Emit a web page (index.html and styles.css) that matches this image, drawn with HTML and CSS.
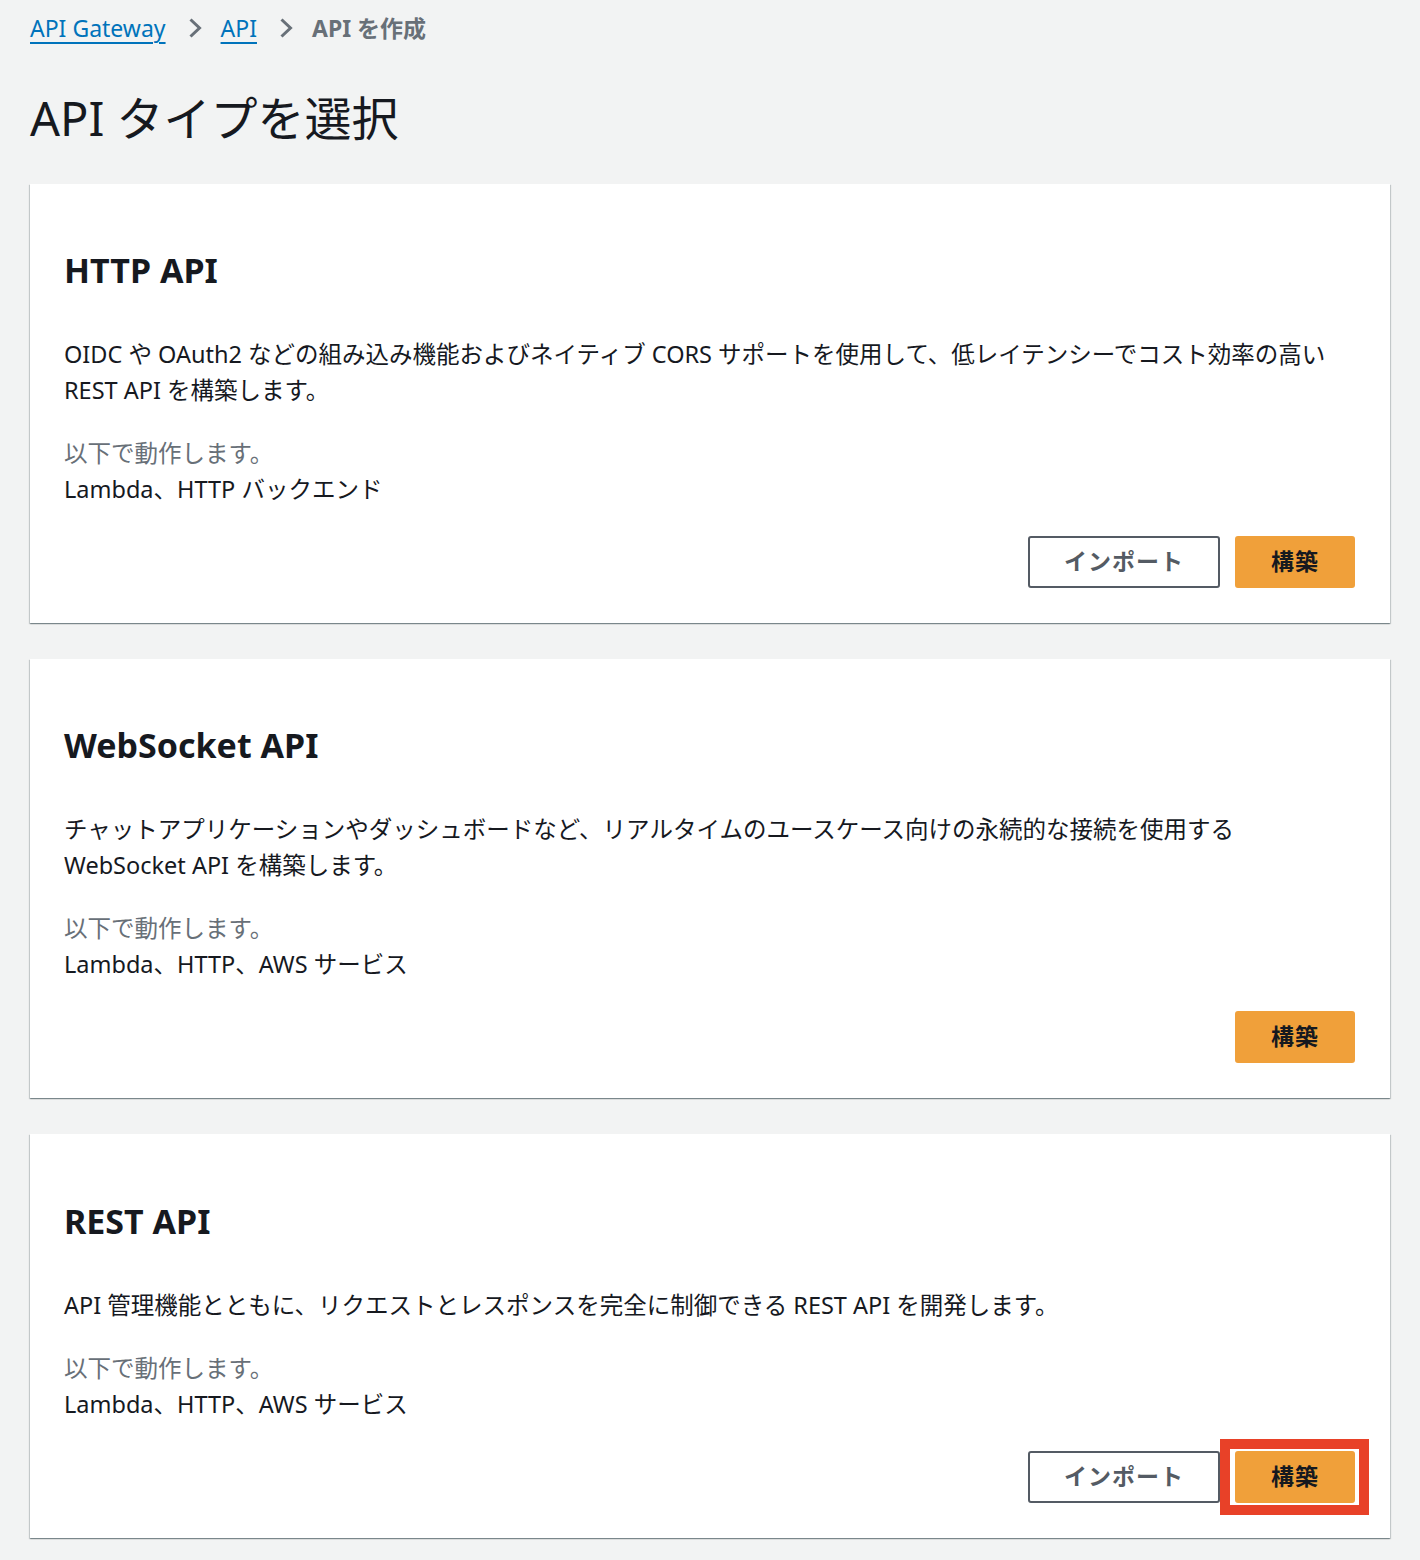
FILE: index.html
```html
<!DOCTYPE html>
<html lang="ja">
<head>
<meta charset="utf-8">
<title>API タイプを選択</title>
<link rel="stylesheet" href="styles.css">
</head>
<body>
<div class="page">
  <nav class="breadcrumb">
    <a href="#" class="crumb-link">API Gateway</a>
    <svg class="chev" viewBox="0 0 14 20" width="14" height="20"><path d="M2.5 1.5l9 8.5-9 8.5" fill="none" stroke="currentColor" stroke-width="3"/></svg>
    <a href="#" class="crumb-link">API</a>
    <svg class="chev" viewBox="0 0 14 20" width="14" height="20"><path d="M2.5 1.5l9 8.5-9 8.5" fill="none" stroke="currentColor" stroke-width="3"/></svg>
    <span class="crumb-current">API を作成</span>
  </nav>
  <h1 class="page-title">API タイプを選択</h1>

  <section class="card">
    <h2 class="card-title">HTTP API</h2>
    <p class="card-desc">OIDC や OAuth2 などの組み込み機能およびネイティブ CORS サポートを使用して、低レイテンシーでコスト効率の高い REST API を構築します。</p>
    <p class="card-meta-label">以下で動作します。</p>
    <p class="card-meta">Lambda、HTTP バックエンド</p>
    <div class="actions">
      <button class="btn btn-normal">インポート</button>
      <button class="btn btn-primary">構築</button>
    </div>
  </section>

  <section class="card">
    <h2 class="card-title">WebSocket API</h2>
    <p class="card-desc">チャットアプリケーションやダッシュボードなど、リアルタイムのユースケース向けの永続的な接続を使用する<br>WebSocket API を構築します。</p>
    <p class="card-meta-label">以下で動作します。</p>
    <p class="card-meta">Lambda、HTTP、AWS サービス</p>
    <div class="actions">
      <button class="btn btn-primary">構築</button>
    </div>
  </section>

  <section class="card card-last">
    <h2 class="card-title">REST API</h2>
    <p class="card-desc">API 管理機能とともに、リクエストとレスポンスを完全に制御できる REST API を開発します。</p>
    <p class="card-meta-label">以下で動作します。</p>
    <p class="card-meta">Lambda、HTTP、AWS サービス</p>
    <div class="actions">
      <button class="btn btn-normal">インポート</button>
      <span class="highlight-wrap">
        <button class="btn btn-primary">構築</button>
        <span class="highlight"></span>
      </span>
    </div>
  </section>
</div>
</body>
</html>
```

FILE: styles.css
```css
* { box-sizing: border-box; }
html, body {
  margin: 0;
  padding: 0;
  background: #f2f3f3;
}
body {
  font-family: "Noto Sans", "Noto Sans CJK JP", sans-serif;
  color: #16191f;
}
.page {
  padding: 13px 30px 20px 30px;
}
.breadcrumb {
  display: flex;
  align-items: center;
  height: 30px;
  font-size: 23px;
  line-height: 30px;
}
.crumb-link {
  color: #0073bb;
  text-decoration: underline;
  text-underline-offset: 5px;
  text-decoration-thickness: 2px;
}
.chev {
  color: #687078;
  margin: 0 19px 0 22px;
}
.crumb-current {
  color: #687078;
  font-weight: 700;
}
.page-title {
  margin: 47px 0 38px 0;
  font-size: 47px;
  line-height: 56px;
  font-weight: 400;
  color: #16191f;
}
.card {
  background: #fff;
  padding: 66px 34px 35px 34px;
  margin-bottom: 36px;
  box-shadow: 0 1px 1px 0 rgba(0, 28, 36, 0.3), 1px 1px 1px 0 rgba(0, 28, 36, 0.15), -1px 1px 1px 0 rgba(0, 28, 36, 0.15);
}
.card-last {
  padding-top: 67px;
}
.card-title {
  margin: 0;
  font-size: 34px;
  line-height: 40px;
  font-weight: 700;
}
.card-desc {
  margin: 46px 0 0 0;
  font-size: 23.5px;
  line-height: 36px;
}
.card-meta-label {
  margin: 27px 0 0 0;
  font-size: 23.5px;
  line-height: 36px;
  color: #687078;
}
.card-meta {
  margin: 0;
  font-size: 23.5px;
  line-height: 36px;
}
.actions {
  display: flex;
  justify-content: flex-end;
  gap: 15px;
  margin-top: 29px;
  padding-right: 1px;
}
.btn {
  height: 52px;
  padding: 0 0 5px 0;
  border-radius: 3px;
  font-family: "Noto Sans", "Noto Sans CJK JP", sans-serif;
  font-size: 23px;
  font-weight: 700;
  letter-spacing: 1px;
  cursor: pointer;
}
.btn-normal {
  background: #fff;
  border: 2px solid #545b64;
  color: #545b64;
  width: 192px;
}
.btn-primary {
  background: #f0a03a;
  border: 2px solid #f0a03a;
  color: #16191f;
  width: 120px;
}
.highlight-wrap {
  position: relative;
  display: inline-flex;
}
.highlight {
  position: absolute;
  left: -15px;
  right: -14px;
  top: -12px;
  bottom: -12px;
  border: 10px solid #e84128;
  pointer-events: none;
}
```
